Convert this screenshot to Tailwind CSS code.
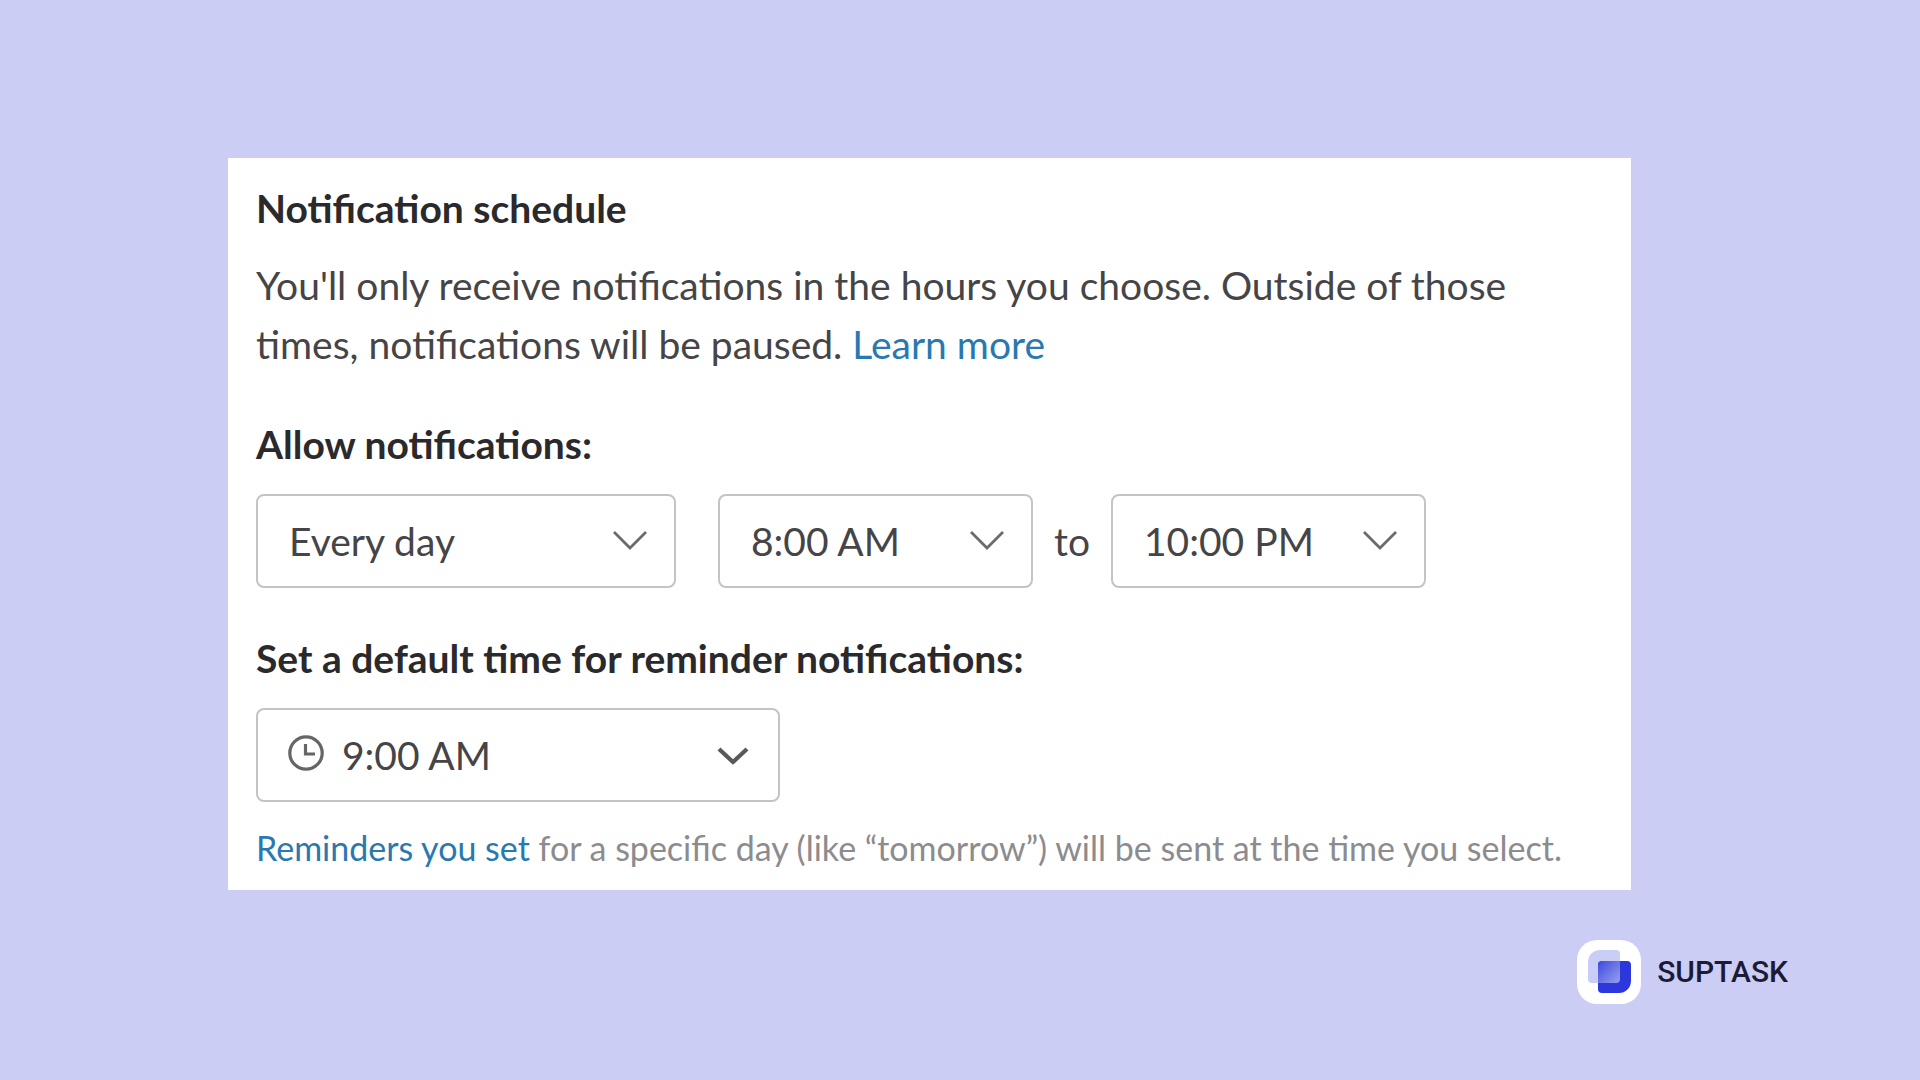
<!DOCTYPE html>
<html lang="en">
<head>
  <meta charset="UTF-8" />
  <meta name="viewport" content="width=device-width, initial-scale=1.0" />
  <title>Notification schedule</title>
  <script src="https://cdn.jsdelivr.net/npm/@tailwindcss/browser@4"></script>
</head>
<body class="min-h-screen bg-[#cccdf5] font-['Lato','Liberation_Sans',sans-serif] text-[#454446]">
  <main class="pt-[158px] pl-[228px] pr-[289px]">
    <form class="bg-white px-7 pt-5 pb-[22px]">
      <h1 class="text-[39px] leading-[60px] font-bold text-[#2a292b]">Notification schedule</h1>
      <p class="mt-[18px] text-[39px] leading-[59px]">
        You'll only receive notifications in the hours you choose. Outside of those times, notifications will be paused.
        <a href="#" class="text-[#2a78b0]">Learn more</a>
      </p>

      <!-- Allowed hours -->
      <label for="days" class="mt-10 block text-[39px] leading-[60px] font-bold text-[#2a292b]">Allow notifications:</label>
      <div class="mt-5 flex items-center text-[39px]">
        <div class="relative w-[420px]">
          <select id="days" class="h-[94px] w-full appearance-none rounded-lg border-2 border-[#c4c4c4] bg-white pl-[31px]">
            <option>Every day</option>
            <option>Weekdays</option>
          </select>
          <svg class="pointer-events-none absolute top-9 right-7 h-6 w-9" viewBox="0 0 36 24" fill="none" stroke="#6b6a6c" stroke-width="2.8"><path d="M2 2 18 18 34 2" /></svg>
        </div>
        <div class="relative ml-[42px] w-[315px]">
          <select id="from" aria-label="From" class="h-[94px] w-full appearance-none rounded-lg border-2 border-[#c4c4c4] bg-white pl-[31px]">
            <option>8:00 AM</option>
            <option>9:00 AM</option>
          </select>
          <svg class="pointer-events-none absolute top-9 right-7 h-6 w-9" viewBox="0 0 36 24" fill="none" stroke="#6b6a6c" stroke-width="2.8"><path d="M2 2 18 18 34 2" /></svg>
        </div>
        <label for="until" class="w-[78px] text-center">to</label>
        <div class="relative w-[315px]">
          <select id="until" class="h-[94px] w-full appearance-none rounded-lg border-2 border-[#c4c4c4] bg-white pl-[31px]">
            <option>10:00 PM</option>
            <option>11:00 PM</option>
          </select>
          <svg class="pointer-events-none absolute top-9 right-7 h-6 w-9" viewBox="0 0 36 24" fill="none" stroke="#6b6a6c" stroke-width="2.8"><path d="M2 2 18 18 34 2" /></svg>
        </div>
      </div>

      <!-- Reminder time -->
      <label for="reminder" class="mt-10 block text-[39px] leading-[60px] font-bold text-[#2a292b]">Set a default time for reminder notifications:</label>
      <div class="relative mt-5 w-[524px] text-[39px]">
        <select id="reminder" class="h-[94px] w-full appearance-none rounded-lg border-2 border-[#c4c4c4] bg-white pl-[84px]">
          <option>9:00 AM</option>
          <option>10:00 AM</option>
        </select>
        <svg class="pointer-events-none absolute top-[27px] left-8 size-9" viewBox="0 0 36 36" fill="none" stroke="#666567" stroke-width="3.2"><circle cx="18" cy="18" r="16.2" /><path d="M17.5 9v10H27" /></svg>
        <svg class="pointer-events-none absolute top-9 right-7 h-6 w-9" viewBox="0 0 36 24" fill="none" stroke="#59585a" stroke-width="4.2"><path d="M3 5 17 18 31 5" /></svg>
      </div>
      <p class="mt-[26px] text-[34px] leading-10 text-[#8c8b8e]">
        <a href="#" class="text-[#2a78b0]">Reminders you set</a> for a specific day (like “tomorrow”) will be sent at the time you select.
      </p>
    </form>
  </main>

  <footer class="mt-[50px] flex items-center justify-end gap-4 pr-[132px]">
    <svg class="size-16" viewBox="0 0 64 64">
      <defs>
        <linearGradient id="overlap" x1="0" y1="0" x2="1" y2="1">
          <stop offset="0" stop-color="#3d4add" />
          <stop offset="1" stop-color="#979fee" />
        </linearGradient>
      </defs>
      <rect width="64" height="64" rx="20" fill="#fff" />
      <path d="M23 10H39a4 4 0 0 1 4 4V39a4 4 0 0 1-4 4H15a4 4 0 0 1-4-4V22A12 12 0 0 1 23 10Z" fill="#cacdf6" />
      <path d="M25 21H50a4 4 0 0 1 4 4V41A12 12 0 0 1 42 53H25a4 4 0 0 1-4-4V25a4 4 0 0 1 4-4Z" fill="#2c38dc" />
      <path d="M25 21H43V39a4 4 0 0 1-4 4H21V25a4 4 0 0 1 4-4Z" fill="url(#overlap)" />
    </svg>
    <span class="font-['Roboto',sans-serif] text-[30px] leading-10 font-medium text-[#1b1b35]">SUPTASK</span>
  </footer>
</body>
</html>
